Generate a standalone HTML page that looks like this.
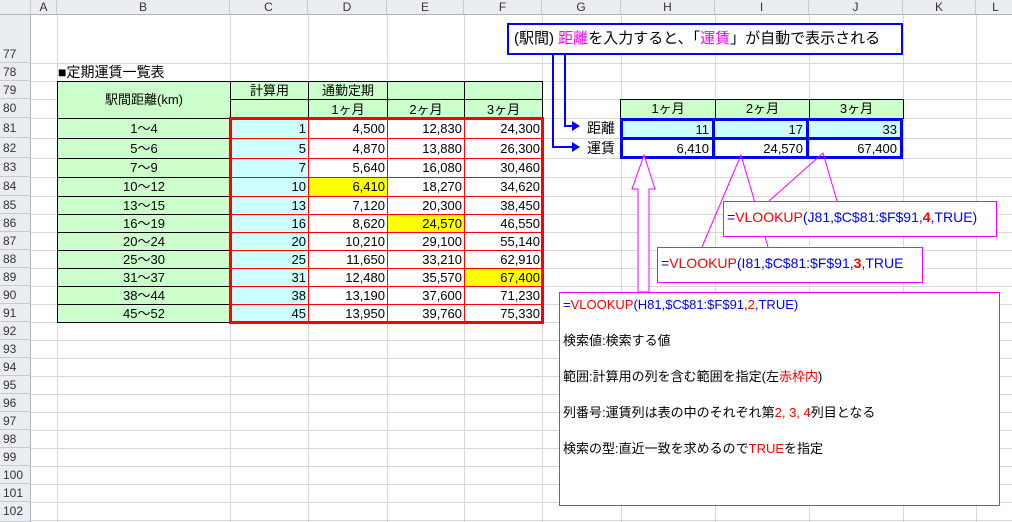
<!DOCTYPE html>
<html><head><meta charset="utf-8"><style>
*{margin:0;padding:0;box-sizing:border-box}
body{width:1012px;height:522px;overflow:hidden;background:#fff;position:relative;font-family:"Liberation Sans","Noto Sans CJK JP",sans-serif;font-size:13px;color:#000}
.a{position:absolute}
.vl{position:absolute;top:15px;width:1px;height:507px;background:#d8d8d8}
.hl{position:absolute;left:31px;height:1px;width:981px;background:#d8d8d8}
.ch{position:absolute;top:0;height:15px;background:#eaedf1;border-right:1px solid #c6c9cf;border-bottom:1px solid #b0b4ba;text-align:center;font-size:12px;line-height:15px;color:#333}
.rh{position:absolute;left:0;width:31px;background:#eaedf1;border-bottom:1px solid #c6c9cf;border-right:1px solid #b0b4ba;font-size:12px;color:#333;text-align:left;padding-left:3px}
.cell{position:absolute;font-size:13px;line-height:15px;white-space:nowrap;overflow:hidden;padding:0 2px;border:1px solid #000}
.g{background:#ccffcc;text-align:center}
.c{background:#ccffff;text-align:right}
.r{text-align:right}
.x{border-color:#f00}
.y{background:#ffff00}
.mag{position:absolute;border:1px solid #f0f;background:#fff;font-size:14px;white-space:nowrap}
.red{color:#f00}.blu{color:#00f}
</style></head><body>
<div class="vl" style="left:57px"></div><div class="vl" style="left:230px"></div><div class="vl" style="left:308px"></div><div class="vl" style="left:387px"></div><div class="vl" style="left:464px"></div><div class="vl" style="left:542px"></div><div class="vl" style="left:621px"></div><div class="vl" style="left:715px"></div><div class="vl" style="left:809px"></div><div class="vl" style="left:903px"></div><div class="vl" style="left:976px"></div>
<div class="hl" style="top:63px"></div><div class="hl" style="top:81px"></div><div class="hl" style="top:99px"></div><div class="hl" style="top:118px"></div><div class="hl" style="top:138px"></div><div class="hl" style="top:158px"></div><div class="hl" style="top:177px"></div><div class="hl" style="top:196px"></div><div class="hl" style="top:214px"></div><div class="hl" style="top:232px"></div><div class="hl" style="top:250px"></div><div class="hl" style="top:268px"></div><div class="hl" style="top:286px"></div><div class="hl" style="top:304px"></div><div class="hl" style="top:322px"></div><div class="hl" style="top:340px"></div><div class="hl" style="top:358px"></div><div class="hl" style="top:376px"></div><div class="hl" style="top:394px"></div><div class="hl" style="top:412px"></div><div class="hl" style="top:430px"></div><div class="hl" style="top:448px"></div><div class="hl" style="top:466px"></div><div class="hl" style="top:484px"></div><div class="hl" style="top:502px"></div><div class="hl" style="top:520px"></div>
<div class="ch" style="left:0;width:31px"></div>
<div class="ch" style="left:31px;width:26px">A</div><div class="ch" style="left:57px;width:173px">B</div><div class="ch" style="left:230px;width:78px">C</div><div class="ch" style="left:308px;width:79px">D</div><div class="ch" style="left:387px;width:77px">E</div><div class="ch" style="left:464px;width:78px">F</div><div class="ch" style="left:542px;width:79px">G</div><div class="ch" style="left:621px;width:94px">H</div><div class="ch" style="left:715px;width:94px">I</div><div class="ch" style="left:809px;width:94px">J</div><div class="ch" style="left:903px;width:73px">K</div><div class="ch" style="left:976px;width:40px">L</div>
<div class="rh" style="top:15px;height:48px;line-height:78px">77</div>
<div class="rh" style="top:63px;height:18px;line-height:18px">78</div>
<div class="rh" style="top:81px;height:18px;line-height:18px">79</div>
<div class="rh" style="top:99px;height:19px;line-height:19px">80</div>
<div class="rh" style="top:118px;height:20px;line-height:20px">81</div>
<div class="rh" style="top:138px;height:20px;line-height:20px">82</div>
<div class="rh" style="top:158px;height:19px;line-height:19px">83</div>
<div class="rh" style="top:177px;height:19px;line-height:19px">84</div>
<div class="rh" style="top:196px;height:18px;line-height:18px">85</div><div class="rh" style="top:214px;height:18px;line-height:18px">86</div><div class="rh" style="top:232px;height:18px;line-height:18px">87</div><div class="rh" style="top:250px;height:18px;line-height:18px">88</div><div class="rh" style="top:268px;height:18px;line-height:18px">89</div><div class="rh" style="top:286px;height:18px;line-height:18px">90</div><div class="rh" style="top:304px;height:18px;line-height:18px">91</div><div class="rh" style="top:322px;height:18px;line-height:18px">92</div><div class="rh" style="top:340px;height:18px;line-height:18px">93</div><div class="rh" style="top:358px;height:18px;line-height:18px">94</div><div class="rh" style="top:376px;height:18px;line-height:18px">95</div><div class="rh" style="top:394px;height:18px;line-height:18px">96</div><div class="rh" style="top:412px;height:18px;line-height:18px">97</div><div class="rh" style="top:430px;height:18px;line-height:18px">98</div><div class="rh" style="top:448px;height:18px;line-height:18px">99</div><div class="rh" style="top:466px;height:18px;line-height:18px">100</div><div class="rh" style="top:484px;height:18px;line-height:18px">101</div><div class="rh" style="top:502px;height:20px;line-height:18px">102</div>

<div class="a" style="left:58px;top:63px;font-size:14px;line-height:18px">■定期運賃一覧表</div>

<!-- header cells -->
<div class="cell g" style="left:57px;top:81px;width:174px;height:38px;line-height:36px">駅間距離(km)</div>
<div class="cell g" style="left:230px;top:81px;width:79px;height:19px;line-height:17px">計算用</div>
<div class="cell g" style="left:308px;top:81px;width:80px;height:19px;line-height:17px">通勤定期</div>
<div class="cell g" style="left:387px;top:81px;width:78px;height:19px"></div>
<div class="cell g" style="left:464px;top:81px;width:79px;height:19px"></div>
<div class="cell g" style="left:230px;top:99px;width:79px;height:20px"></div>
<div class="cell g" style="left:308px;top:99px;width:80px;height:20px;line-height:20px">1ヶ月</div>
<div class="cell g" style="left:387px;top:99px;width:78px;height:20px;line-height:20px">2ヶ月</div>
<div class="cell g" style="left:464px;top:99px;width:79px;height:20px;line-height:20px">3ヶ月</div>

<!-- data rows: tops/heights -->
<div id="d"></div>
<div class="cell g" style="left:57px;top:118px;width:174px;height:21px;line-height:19px">1～4</div><div class="cell c x" style="left:230px;top:118px;width:79px;height:21px;line-height:19px">1</div><div class="cell r x" style="left:308px;top:118px;width:80px;height:21px;line-height:19px">4,500</div><div class="cell r x" style="left:387px;top:118px;width:78px;height:21px;line-height:19px">12,830</div><div class="cell r x" style="left:464px;top:118px;width:79px;height:21px;line-height:19px">24,300</div>
<div class="cell g" style="left:57px;top:138px;width:174px;height:21px;line-height:19px">5～6</div><div class="cell c x" style="left:230px;top:138px;width:79px;height:21px;line-height:19px">5</div><div class="cell r x" style="left:308px;top:138px;width:80px;height:21px;line-height:19px">4,870</div><div class="cell r x" style="left:387px;top:138px;width:78px;height:21px;line-height:19px">13,880</div><div class="cell r x" style="left:464px;top:138px;width:79px;height:21px;line-height:19px">26,300</div>
<div class="cell g" style="left:57px;top:158px;width:174px;height:20px;line-height:18px">7～9</div><div class="cell c x" style="left:230px;top:158px;width:79px;height:20px;line-height:18px">7</div><div class="cell r x" style="left:308px;top:158px;width:80px;height:20px;line-height:18px">5,640</div><div class="cell r x" style="left:387px;top:158px;width:78px;height:20px;line-height:18px">16,080</div><div class="cell r x" style="left:464px;top:158px;width:79px;height:20px;line-height:18px">30,460</div>
<div class="cell g" style="left:57px;top:177px;width:174px;height:20px;line-height:18px">10～12</div><div class="cell c x" style="left:230px;top:177px;width:79px;height:20px;line-height:18px">10</div><div class="cell r x y" style="left:308px;top:177px;width:80px;height:20px;line-height:18px">6,410</div><div class="cell r x" style="left:387px;top:177px;width:78px;height:20px;line-height:18px">18,270</div><div class="cell r x" style="left:464px;top:177px;width:79px;height:20px;line-height:18px">34,620</div>
<div class="cell g" style="left:57px;top:196px;width:174px;height:19px;line-height:17px">13～15</div><div class="cell c x" style="left:230px;top:196px;width:79px;height:19px;line-height:17px">13</div><div class="cell r x" style="left:308px;top:196px;width:80px;height:19px;line-height:17px">7,120</div><div class="cell r x" style="left:387px;top:196px;width:78px;height:19px;line-height:17px">20,300</div><div class="cell r x" style="left:464px;top:196px;width:79px;height:19px;line-height:17px">38,450</div>
<div class="cell g" style="left:57px;top:214px;width:174px;height:19px;line-height:17px">16～19</div><div class="cell c x" style="left:230px;top:214px;width:79px;height:19px;line-height:17px">16</div><div class="cell r x" style="left:308px;top:214px;width:80px;height:19px;line-height:17px">8,620</div><div class="cell r x y" style="left:387px;top:214px;width:78px;height:19px;line-height:17px">24,570</div><div class="cell r x" style="left:464px;top:214px;width:79px;height:19px;line-height:17px">46,550</div>
<div class="cell g" style="left:57px;top:232px;width:174px;height:19px;line-height:17px">20～24</div><div class="cell c x" style="left:230px;top:232px;width:79px;height:19px;line-height:17px">20</div><div class="cell r x" style="left:308px;top:232px;width:80px;height:19px;line-height:17px">10,210</div><div class="cell r x" style="left:387px;top:232px;width:78px;height:19px;line-height:17px">29,100</div><div class="cell r x" style="left:464px;top:232px;width:79px;height:19px;line-height:17px">55,140</div>
<div class="cell g" style="left:57px;top:250px;width:174px;height:19px;line-height:17px">25～30</div><div class="cell c x" style="left:230px;top:250px;width:79px;height:19px;line-height:17px">25</div><div class="cell r x" style="left:308px;top:250px;width:80px;height:19px;line-height:17px">11,650</div><div class="cell r x" style="left:387px;top:250px;width:78px;height:19px;line-height:17px">33,210</div><div class="cell r x" style="left:464px;top:250px;width:79px;height:19px;line-height:17px">62,910</div>
<div class="cell g" style="left:57px;top:268px;width:174px;height:19px;line-height:17px">31～37</div><div class="cell c x" style="left:230px;top:268px;width:79px;height:19px;line-height:17px">31</div><div class="cell r x" style="left:308px;top:268px;width:80px;height:19px;line-height:17px">12,480</div><div class="cell r x" style="left:387px;top:268px;width:78px;height:19px;line-height:17px">35,570</div><div class="cell r x y" style="left:464px;top:268px;width:79px;height:19px;line-height:17px">67,400</div>
<div class="cell g" style="left:57px;top:286px;width:174px;height:19px;line-height:17px">38～44</div><div class="cell c x" style="left:230px;top:286px;width:79px;height:19px;line-height:17px">38</div><div class="cell r x" style="left:308px;top:286px;width:80px;height:19px;line-height:17px">13,190</div><div class="cell r x" style="left:387px;top:286px;width:78px;height:19px;line-height:17px">37,600</div><div class="cell r x" style="left:464px;top:286px;width:79px;height:19px;line-height:17px">71,230</div>
<div class="cell g" style="left:57px;top:304px;width:174px;height:19px;line-height:17px">45～52</div><div class="cell c x" style="left:230px;top:304px;width:79px;height:19px;line-height:17px">45</div><div class="cell r x" style="left:308px;top:304px;width:80px;height:19px;line-height:17px">13,950</div><div class="cell r x" style="left:387px;top:304px;width:78px;height:19px;line-height:17px">39,760</div><div class="cell r x" style="left:464px;top:304px;width:79px;height:19px;line-height:17px">75,330</div>
<div class="a" style="left:229px;top:117px;width:315px;height:207px;border:3px solid #f00"></div>

<!-- right table -->
<div class="cell g" style="left:620px;top:99px;width:96px;height:20px;line-height:18px">1ヶ月</div>
<div class="cell g" style="left:715px;top:99px;width:95px;height:20px;line-height:18px">2ヶ月</div>
<div class="cell g" style="left:809px;top:99px;width:95px;height:20px;line-height:18px">3ヶ月</div>
<div class="a" style="left:620px;top:118px;width:95px;height:22px;border:3px solid #00f;background:#ccffff;text-align:right;padding-right:3px;line-height:17px">11</div>
<div class="a" style="left:712px;top:118px;width:97px;height:22px;border:3px solid #00f;background:#ccffff;text-align:right;padding-right:3px;line-height:17px">17</div>
<div class="a" style="left:806px;top:118px;width:97px;height:22px;border:3px solid #00f;background:#ccffff;text-align:right;padding-right:3px;line-height:17px">33</div>
<div class="a" style="left:620px;top:137px;width:95px;height:22px;border:3px solid #00f;text-align:right;padding-right:3px;line-height:17px">6,410</div>
<div class="a" style="left:712px;top:137px;width:97px;height:22px;border:3px solid #00f;text-align:right;padding-right:3px;line-height:17px">24,570</div>
<div class="a" style="left:806px;top:137px;width:97px;height:22px;border:3px solid #00f;text-align:right;padding-right:3px;line-height:17px">67,400</div>
<div class="a" style="left:587px;top:119px;font-size:14px;line-height:18px">距離</div>
<div class="a" style="left:587px;top:139px;font-size:14px;line-height:18px">運賃</div>

<svg class="a" style="left:0;top:0" width="1012" height="522">
<g fill="none" stroke="#00f" stroke-width="2">
<polyline points="565,55 565,126 574,126"/><polyline points="553,55 553,147 574,147"/>
</g>
<polygon points="572,121 580,126 572,131" fill="#00f"/><polygon points="572,142 580,147 572,152" fill="#00f"/>
<g fill="none" stroke="#f0f" stroke-width="1">
<polyline points="769,201 823,153 837,201"/>
<polyline points="702,247 741,155 768,247"/>
<polygon points="638,292 638,189 632,189 644,155 655,189 649,189 649,292" fill="#fff"/>
</g>
</svg>

<div class="a" style="left:507px;top:23px;width:396px;height:32px;border:2px solid #00f;background:#fff;font-size:15px;line-height:28px;padding-left:5px;white-space:nowrap">(駅間) <span style="color:#f0f">距離</span>を入力すると、「<span style="color:#f0f">運賃</span>」が自動で表示される</div>

<div class="mag" style="left:723px;top:201px;width:274px;height:36px;line-height:30px;padding-left:3px"><span class="blu">=</span><span class="red">VLOOKUP</span><span class="blu">(J81,$C$81:$F$91,</span><b class="red">4</b><span class="blu">,TRUE)</span></div>
<div class="mag" style="left:657px;top:247px;width:266px;height:36px;line-height:30px;padding-left:3px"><span class="blu">=</span><span class="red">VLOOKUP</span><span class="blu">(I81,$C$81:$F$91,</span><b class="red">3</b><span class="blu">,TRUE</span></div>

<div class="mag" style="left:559px;top:292px;width:441px;height:214px;font-size:13px;padding-left:3px">
<div style="position:absolute;left:3px;top:3px;line-height:18px"><span class="blu">=</span><span class="red">VLOOKUP</span><span class="blu">(H81,$C$81:$F$91,</span><span class="red">2</span><span class="blu">,TRUE)</span></div>
<div style="position:absolute;left:3px;top:39px;line-height:18px">検索値:検索する値</div>
<div style="position:absolute;left:3px;top:75px;line-height:18px">範囲:計算用の列を含む範囲を指定(左<span class="red">赤枠内</span>)</div>
<div style="position:absolute;left:3px;top:111px;line-height:18px">列番号:運賃列は表の中のそれぞれ第<span class="red">2, 3, 4</span>列目となる</div>
<div style="position:absolute;left:3px;top:147px;line-height:18px">検索の型:直近一致を求めるので<span class="red">TRUE</span>を指定</div>
</div>
</body></html>
